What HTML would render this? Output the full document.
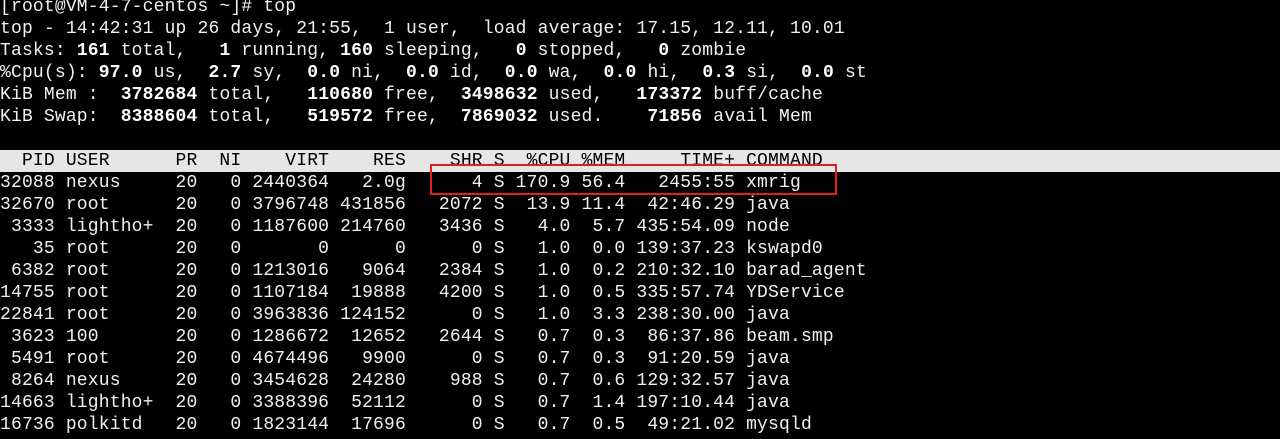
<!DOCTYPE html>
<html><head><meta charset="utf-8"><style>
html,body{margin:0;padding:0;background:#000;width:1280px;height:439px;overflow:hidden}
pre{margin:0;position:absolute;left:0;top:-4px;font-family:"Liberation Mono",monospace;font-size:18px;letter-spacing:0.17px;line-height:22px;color:#f0f0f0;white-space:pre}
b{font-weight:bold;color:#fff}
.hd{display:block;background:#e6e6e6;color:#000;width:1280px}
.box{position:absolute;left:430px;top:164px;width:403px;height:27px;border:2px solid #e02020}
</style></head><body>
<pre>[root@VM-4-7-centos ~]# top
top - 14:42:31 up 26 days, 21:55,  1 user,  load average: 17.15, 12.11, 10.01
Tasks: <b>161</b> total,   <b>1</b> running, <b>160</b> sleeping,   <b>0</b> stopped,   <b>0</b> zombie
%Cpu(s): <b>97.0</b> us,  <b>2.7</b> sy,  <b>0.0</b> ni,  <b>0.0</b> id,  <b>0.0</b> wa,  <b>0.0</b> hi,  <b>0.3</b> si,  <b>0.0</b> st
KiB Mem :  <b>3782684</b> total,   <b>110680</b> free,  <b>3498632</b> used,   <b>173372</b> buff/cache
KiB Swap:  <b>8388604</b> total,   <b>519572</b> free,  <b>7869032</b> used.    <b>71856</b> avail Mem

<span class="hd">  PID USER      PR  NI    VIRT    RES    SHR S  %CPU %MEM     TIME+ COMMAND</span>32088 nexus     20   0 2440364   2.0g      4 S 170.9 56.4   2455:55 xmrig
32670 root      20   0 3796748 431856   2072 S  13.9 11.4  42:46.29 java
 3333 lightho+  20   0 1187600 214760   3436 S   4.0  5.7 435:54.09 node
   35 root      20   0       0      0      0 S   1.0  0.0 139:37.23 kswapd0
 6382 root      20   0 1213016   9064   2384 S   1.0  0.2 210:32.10 barad_agent
14755 root      20   0 1107184  19888   4200 S   1.0  0.5 335:57.74 YDService
22841 root      20   0 3963836 124152      0 S   1.0  3.3 238:30.00 java
 3623 100       20   0 1286672  12652   2644 S   0.7  0.3  86:37.86 beam.smp
 5491 root      20   0 4674496   9900      0 S   0.7  0.3  91:20.59 java
 8264 nexus     20   0 3454628  24280    988 S   0.7  0.6 129:32.57 java
14663 lightho+  20   0 3388396  52112      0 S   0.7  1.4 197:10.44 java
16736 polkitd   20   0 1823144  17696      0 S   0.7  0.5  49:21.02 mysqld</pre>
<div class="box"></div>
</body></html>
